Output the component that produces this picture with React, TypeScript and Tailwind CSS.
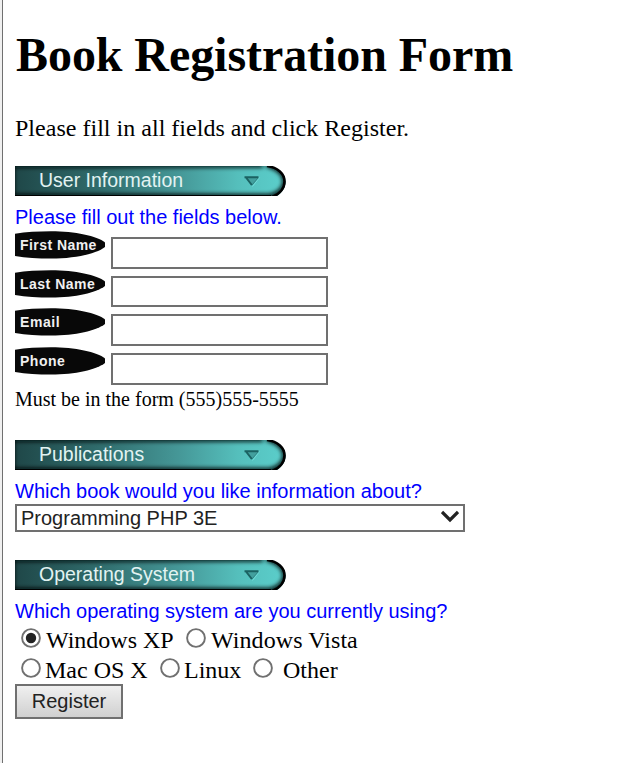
import type { ReactNode } from "react";

const serif = "font-['Liberation_Serif','Times_New_Roman',serif]";
const sans = "font-['Liberation_Sans',Arial,sans-serif]";

function Banner({ id, children }: { id: string; children: ReactNode }) {
  return (
    <div className="relative h-[30px] w-[272px]">
      <svg className="absolute inset-0" width="272" height="30" viewBox="0 0 272 30">
        <defs>
          <linearGradient id={`${id}-across`} x1="0" x2="1" y1="0" y2="0">
            <stop offset="0" stopColor="#1f4748" />
            <stop offset="0.3" stopColor="#2f6b6b" />
            <stop offset="0.6" stopColor="#459797" />
            <stop offset="0.82" stopColor="#55bfbc" />
            <stop offset="1" stopColor="#5bcfcc" />
          </linearGradient>
          <filter id={`${id}-soft`} filterUnits="userSpaceOnUse" x="-20" y="-20" width="312" height="70">
            <feGaussianBlur stdDeviation="2" />
          </filter>
          <filter id={`${id}-edge`} filterUnits="userSpaceOnUse" x="-20" y="-20" width="312" height="70">
            <feGaussianBlur stdDeviation="0.7" />
          </filter>
          <clipPath id={`${id}-clip`}>
            <path d="M0 0H254C264 2 270.500 8 270.500 15.500C270.500 21 268 26 262 30H0Z" />
          </clipPath>
        </defs>
        <g clipPath={`url(#${id}-clip)`}>
          <rect width="272" height="30" fill={`url(#${id}-across)`} />
          <path
            d="M-3 -6V34M-6 -1H248M-4 30.500H255C263 29 270 23 270 15.500C270 8 263 1 252 -1"
            fill="none"
            stroke="#001010"
            strokeWidth="5"
            filter={`url(#${id}-soft)`}
          />
          <path d="M0 30.500H256" fill="none" stroke="#000" strokeWidth="3" filter={`url(#${id}-edge)`} />
        </g>
        <path
          d="M252 0C263 1.500 269.500 8 269.500 15.500C269.500 22 265 28 257 31"
          fill="none"
          stroke="#000"
          strokeWidth="2.600"
          filter={`url(#${id}-edge)`}
        />
        <path d="M231 11.500H243L236.500 19.500Z" fill="#43a09e" />
        <path d="M244.500 11.500L237.500 20.500" stroke="#72dcd8" strokeWidth="1" />
        <path d="M229.500 11.300H243.500M231 11.500L236.800 19" fill="none" stroke="#1b6262" strokeWidth="2" />
        <path d="M243 12L236.800 19.300" stroke="#2d7f7e" strokeWidth="1" />
      </svg>
      <div className={`relative pl-6 text-[19.500px] leading-[28px] whitespace-nowrap text-[#e2f3f2] ${sans}`}>{children}</div>
    </div>
  );
}

function Pill({ children }: { children: ReactNode }) {
  return (
    <div className="relative h-[28px] w-[90px] overflow-hidden">
      <svg className="absolute inset-0" width="90" height="28" viewBox="0 0 90 28">
        <path d="M0 2.700C11 1 23 0.300 36 0.300C60 0.300 82 5 90 11.500V16C82 22.500 60 27.600 36 27.600C23 27.600 11 26.800 0 25Z" fill="#080808" />
      </svg>
      <div className={`relative pl-[5px] text-[14px] leading-[28px] font-bold whitespace-nowrap text-[#f0f0f0] ${sans}`}>{children}</div>
    </div>
  );
}

function Field({ label, spacing, height, box }: { label: string; spacing: string; height: string; box: string }) {
  return (
    <label className={`flex ${height}`}>
      <Pill>
        <span className={spacing}>{label}</span>
      </Pill>
      <input className={`mt-[6px] ml-[6px] w-[217px] border-2 border-[#707070] bg-white px-1 outline-none ${box}`} />
    </label>
  );
}

function Prompt({ children }: { children: ReactNode }) {
  return <p className={`mt-[9px] h-6 text-[20px] leading-6 whitespace-nowrap text-[#0000ff] ${sans}`}>{children}</p>;
}

function Radio({ checked = false, label, width, gap }: { checked?: boolean; label: string; width: string; gap: string }) {
  return (
    <label className={`flex whitespace-nowrap ${width}`}>
      <svg className={`mt-[3px] shrink-0 ${gap}`} width="20" height="20" viewBox="0 0 20 20">
        <circle cx="10" cy="10" r="8.900" fill="#fff" stroke="#707070" strokeWidth="1.900" />
        {checked && <circle cx="10" cy="10" r="5.200" fill="#222" />}
      </svg>
      <span>{label}</span>
    </label>
  );
}

export default function App() {
  return (
    <div className="flex h-[763px] w-[621px] overflow-hidden bg-white text-black">
      <div className="w-[3px] shrink-0 border-r border-[#707070] bg-[#f0f0f0]" />
      <main className={`flex flex-col items-start pt-[27px] pl-3 ${serif}`}>
        <h1 className="pl-px text-[48px] leading-[56px] font-bold tracking-[-0.070px] whitespace-nowrap">Book Registration Form</h1>
        <p className="mt-[31px] text-[24px] leading-[28px] tracking-[0.020px] whitespace-nowrap">Please fill in all fields and click Register.</p>

        <section className="mt-6">
          <Banner id="user">User Information</Banner>
          <Prompt>Please fill out the fields below.</Prompt>
          <div className="mt-[2px]">
            <Field label="First Name" spacing="tracking-[0.450px]" height="h-[39px]" box="h-[32px]" />
            <Field label="Last Name" spacing="tracking-[0.500px]" height="h-[38px]" box="h-[31px]" />
            <Field label="Email" spacing="tracking-[0.600px]" height="h-[39px]" box="h-[32px]" />
            <Field label="Phone" spacing="tracking-[0.500px]" height="h-[38px]" box="h-[32px]" />
          </div>
          <p className="mt-[2px] text-[20px] leading-6 whitespace-nowrap">Must be in the form (555)555-5555</p>
        </section>

        <section className="mt-[29px]">
          <Banner id="books">Publications</Banner>
          <Prompt>Which book would you like information about?</Prompt>
          <div className={`mt-px flex h-[28px] w-[450px] items-center justify-between border-2 border-[#707070] pr-[4px] pl-1 text-[20px] leading-6 text-[#222] ${sans}`}>
            <span>Programming PHP 3E</span>
            <svg className="mb-[3px]" width="18" height="13" viewBox="0 0 18 13">
              <path d="M1 2L9 10L17 2" fill="none" stroke="#222" strokeWidth="3.200" />
            </svg>
          </div>
        </section>

        <section className="mt-7">
          <Banner id="system">Operating System</Banner>
          <Prompt>Which operating system are you currently using?</Prompt>
          <div className="mt-[2px] flex pl-[6px] text-[24px] leading-[30px]">
            <Radio checked label="Windows XP" width="w-[165px]" gap="mr-[5px]" />
            <Radio label="Windows Vista" width="w-[180px] tracking-[0.080px]" gap="mr-[5px]" />
          </div>
          <div className="flex h-[29px] pl-[6px] text-[24px] leading-[30px]">
            <Radio label="Mac OS X" width="w-[139px]" gap="mr-[4px]" />
            <Radio label="Linux" width="w-[93px]" gap="mr-[4px]" />
            <Radio label="Other" width="w-[100px]" gap="mr-[10px]" />
          </div>
          <button className={`h-[35px] w-[108px] border-2 border-[#707070] bg-linear-to-b from-[#f0f0f0] to-[#d0d0d0] text-[20px] leading-[31px] text-[#222] ${sans}`}>
            Register
          </button>
        </section>
      </main>
    </div>
  );
}
